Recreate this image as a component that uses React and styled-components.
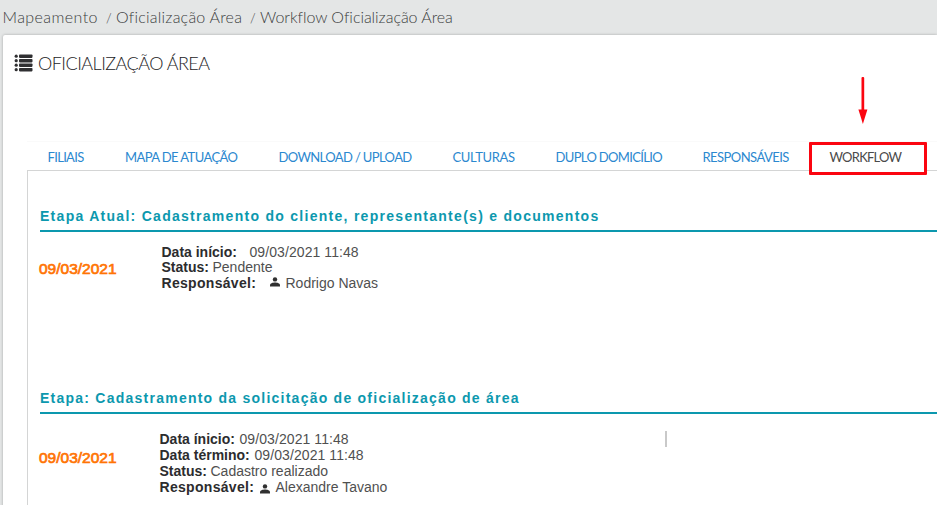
import React from "react";
import styled, { createGlobalStyle } from "styled-components";

const GlobalStyle = createGlobalStyle`
  *, *::before, *::after { box-sizing: border-box; }
  body {
    margin: 0;
    background: #e4e6e6;
    overflow: hidden;
    font-family: "Liberation Sans", Arial, sans-serif;
  }
`;

const Page = styled.div`
  height: 505px;
  display: flex;
  flex-direction: column;
  white-space: nowrap;
  overflow: hidden;
`;

const Breadcrumb = styled.nav`
  height: 35px;
  flex: none;
  display: flex;
  padding-left: 2.5px;
  font: 300 16px/34px Lato, sans-serif;
  color: #3c3e3e;
`;

const Crumb = styled.span`
  width: ${(p) => p.$width}px;
  letter-spacing: ${(p) => p.$tracking}px;
  flex: none;
`;

const Slash = styled.span`
  width: 10px;
  flex: none;
  font-size: 13px;
  padding-top: 1px;
`;

const Panel = styled.main`
  position: relative;
  flex: 1;
  margin-left: 3px;
  background: #fff;
  border-top-left-radius: 2px;
  box-shadow: 0 0 3px rgba(0, 0, 0, 0.28);
`;

const PanelTitle = styled.h1`
  margin: 0;
  height: 106px;
  display: flex;
  align-items: flex-start;
  padding: 19px 0 0 11px;
  color: #1c1c1e;
  font: 300 18px/18px Lato, sans-serif;
  letter-spacing: -0.53px;
`;

const ListIcon = styled.svg`
  width: 19px;
  height: 18px;
  margin-right: 5px;
  flex: none;
`;

const TitleText = styled.span``;

const Tabs = styled.div`
  height: 30px;
  margin-left: 24px;
  display: flex;
  border-top: 1px solid #fafafa;
  border-bottom: 1px solid #d4d5d5;
`;

const Tab = styled.button`
  border: 0;
  background: none;
  padding: 0 0 0 20.5px;
  flex: none;
  width: ${(p) => p.$width}px;
  text-align: left;
  font: 400 13px/30px Lato, sans-serif;
  letter-spacing: ${(p) => p.$tracking}px;
  color: #2b88cf;
`;

const ActiveTab = styled(Tab)`
  height: 33px;
  padding: 0 0 2px 17.5px;
  border: 3px solid #fb0510;
  border-radius: 1px;
  background: #fff;
  line-height: 25px;
  color: #4a4a4a;
`;

const Arrow = styled.svg`
  position: absolute;
  left: 854px;
  top: 42px;
  width: 12px;
  height: 48px;
`;

const Content = styled.div`
  margin-left: 24px;
  height: 340px;
  padding: 31px 0 0 12px;
  border-left: 1px solid #d4d5d5;
`;

const Step = styled.section`
  height: 182px;
`;

const StepTitle = styled.h2`
  margin: 0;
  height: 30px;
  padding-top: 6px;
  border-bottom: 2px solid #0c98ae;
  color: #0c98ae;
  font: 700 14px/17px "Liberation Sans", Arial, sans-serif;
  letter-spacing: ${(p) => p.$tracking}px;
`;

const StepBody = styled.div`
  display: flex;
  padding-top: ${(p) => p.$top}px;
`;

const StepDate = styled.div`
  width: ${(p) => p.$width}px;
  flex: none;
  padding-top: ${(p) => p.$drop}px;
  color: #ff7404;
  font-size: 15.5px;
  line-height: 16px;
  -webkit-text-stroke: 0.7px #ff7404;
  margin-left: -1px;
`;

const Details = styled.dl`
  margin: 0;
  width: 505px;
  color: #505050;
  font-size: 14px;
`;

const Detail = styled.div`
  display: flex;
  height: ${(p) => p.$height || 16}px;
  line-height: 16px;
`;

const Term = styled.dt`
  width: ${(p) => p.$width}px;
  flex: none;
  color: #2c2c2e;
  font-weight: 700;
  letter-spacing: ${(p) => p.$tracking || 0}px;
`;

const Value = styled.dd`
  margin: 0;
  display: flex;
  letter-spacing: ${(p) => p.$tracking || 0}px;
`;

const PersonIcon = styled.svg`
  width: 10px;
  height: 10px;
  margin: ${(p) => p.$top}px 6px 0 0;
  flex: none;
`;

const Divider = styled.span`
  width: 2px;
  height: 16px;
  background: #c9c9c9;
`;

const Person = ({ top }) => (
  <PersonIcon $top={top} viewBox="0 0 10 10" fill="#303030">
    <circle cx="5" cy="2.4" r="2.2" />
    <path d="M0 9.4V8.2C0 6.2 2.6 5.4 5 5.4s5 .8 5 2.8v1.2z" />
  </PersonIcon>
);

const tabs = [
  ["FILIAIS", 77.5, -0.68],
  ["MAPA DE ATUAÇÃO", 153.5, -0.59],
  ["DOWNLOAD / UPLOAD", 174, -0.62],
  ["CULTURAS", 103, -0.35],
  ["DUPLO DOMICÍLIO", 147, -0.65],
  ["RESPONSÁVEIS", 127, -0.54],
];

export default function App() {
  return (
    <Page>
      <GlobalStyle />
      <Breadcrumb>
        <Crumb $width={103.5} $tracking={0.42}>Mapeamento</Crumb>
        <Slash>/</Slash>
        <Crumb $width={134} $tracking={0.22}>Oficialização Área</Crumb>
        <Slash>/</Slash>
        <Crumb $width={200} $tracking={-0.04}>Workflow Oficialização Área</Crumb>
      </Breadcrumb>
      <Panel>
        <PanelTitle>
          <ListIcon viewBox="0 0 19 18" fill="#303032">
            {[0.5, 5, 9.5, 14].map((y) => (
              <g key={y}>
                <circle cx="2.2" cy={y + 1.7} r="1.6" />
                <rect x="5" y={y} width="13.5" height="3.4" rx="0.8" />
              </g>
            ))}
          </ListIcon>
          <TitleText>OFICIALIZAÇÃO ÁREA</TitleText>
        </PanelTitle>
        <Tabs>
          {tabs.map(([label, width, tracking]) => (
            <Tab key={label} $width={width} $tracking={tracking}>{label}</Tab>
          ))}
          <ActiveTab $width={118} $tracking={-0.75}>WORKFLOW</ActiveTab>
        </Tabs>
        <Content>
          <Step>
            <StepTitle $tracking={1.28}>
              Etapa Atual: Cadastramento do cliente, representante(s) e documentos
            </StepTitle>
            <StepBody $top={12}>
              <StepDate $width={122.5} $drop={17}>09/03/2021</StepDate>
              <Details>
                <Detail $height={15}>
                  <Term $width={88}>Data início:</Term>
                  <Value $tracking={0.08}>09/03/2021 11:48</Value>
                </Detail>
                <Detail>
                  <Term $width={51}>Status:</Term>
                  <Value>Pendente</Value>
                </Detail>
                <Detail>
                  <Term $width={108} $tracking={0.3}>Responsável:</Term>
                  <Value><Person top={2} />Rodrigo Navas</Value>
                </Detail>
              </Details>
            </StepBody>
          </Step>
          <Step>
            <StepTitle $tracking={1.24}>
              Etapa: Cadastramento da solicitação de oficialização de área
            </StepTitle>
            <StepBody $top={17}>
              <StepDate $width={120.5} $drop={19}>09/03/2021</StepDate>
              <Details>
                <Detail>
                  <Term $width={80}>Data ínicio:</Term>
                  <Value $tracking={0.08}>09/03/2021 11:48</Value>
                </Detail>
                <Detail>
                  <Term $width={95}>Data término:</Term>
                  <Value $tracking={0.08}>09/03/2021 11:48</Value>
                </Detail>
                <Detail>
                  <Term $width={51}>Status:</Term>
                  <Value>Cadastro realizado</Value>
                </Detail>
                <Detail>
                  <Term $width={100} $tracking={0.3}>Responsável:</Term>
                  <Value><Person top={5} />Alexandre Tavano</Value>
                </Detail>
              </Details>
              <Divider />
            </StepBody>
          </Step>
        </Content>
        <Arrow viewBox="0 0 12 48" fill="#fb0510">
          <rect x="4.5" y="0" width="2.7" height="36" rx="1" />
          <path d="M1.4 32.5h9L5.9 47z" />
        </Arrow>
      </Panel>
    </Page>
  );
}
